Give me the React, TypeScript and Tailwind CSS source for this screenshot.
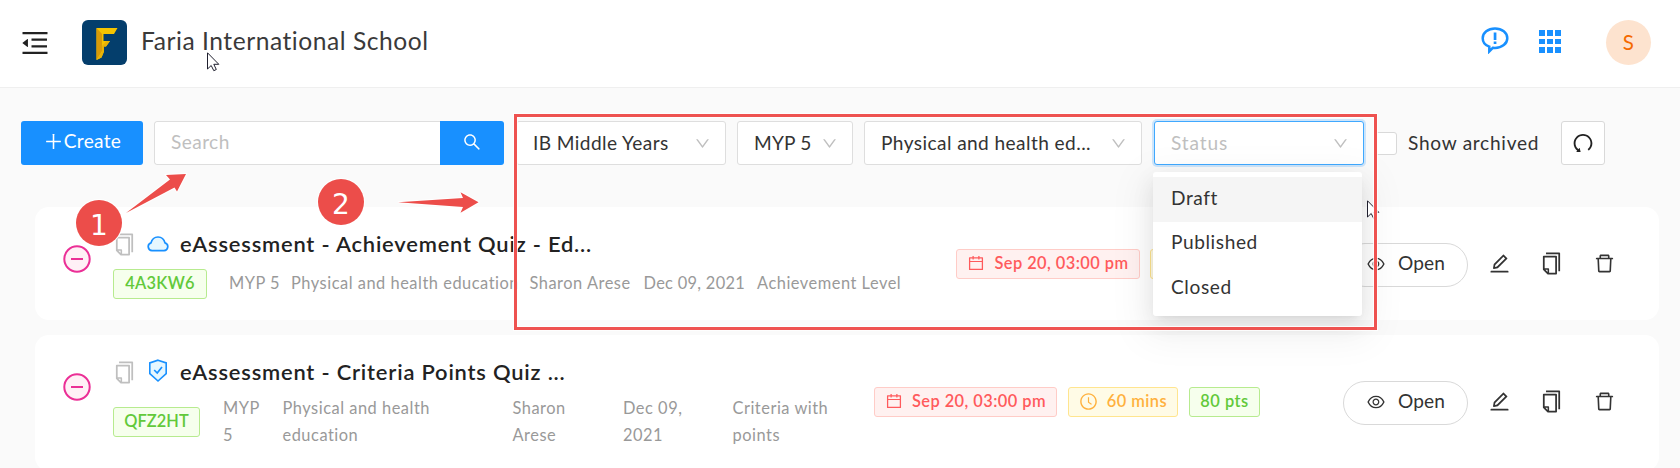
import type { ReactNode } from 'react';
import {
  AiOutlineCalendar,
  AiOutlineClockCircle,
  AiOutlineCopy,
  AiOutlineDelete,
  AiOutlineDown,
  AiOutlineEdit,
  AiOutlineEye,
  AiOutlineMenuFold,
  AiOutlinePlus,
  AiOutlineSearch,
  AiOutlineUndo,
} from 'react-icons/ai';

const statusOptions = ['Draft', 'Published', 'Closed'];

function Logo() {
  return (
    <svg className="ml-[31px] size-[45px]" viewBox="0 0 45 45">
      <rect width="45" height="45" rx="6" fill="#043e6c" />
      <path d="M14.500 8h21l-3.500 6h-10.500v7h6.500l-4 5.500h-2v5l-2.500 6-5 2.500z" fill="#f5c400" />
      <path d="M14.500 8l5.500 6v17l-5.500 9z" fill="#d99a08" />
      <path d="M20 26l4-4.500 4-.5-4 5.500h-2v5l-2.500 6-5 2.500 5.500-8z" fill="#e9b106" />
    </svg>
  );
}

function Cursor({ className }: { className: string }) {
  return (
    <svg className={className} width="13" height="20" viewBox="0 0 13 20">
      <path
        d="M.5 .8v16.200l3.700-3.500 2.600 5.200 2.500-1.200-2.500-5.200h5z"
        fill="#fff"
        stroke="#1f1f2e"
        strokeWidth="1"
      />
    </svg>
  );
}

function CloudIcon() {
  return (
    <svg className="h-[16px] w-[22px]" viewBox="0 0 22 16">
      <path
        d="M5 14.700a4 4 0 0 1-1-7.800c.9-3.500 3.500-5.900 7-5.900s6.100 2.400 7 5.900a4 4 0 0 1-1 7.800z"
        fill="#e6f7ff"
        stroke="#1890ff"
        strokeWidth="1.700"
      />
    </svg>
  );
}

function ShieldIcon() {
  return (
    <svg className="-mt-[2px] h-[24px] w-[22px]" viewBox="0 0 22 24">
      <path
        d="M11 1.200l8.200 2.700v10.800L11 22l-8.200-7.300V3.900z"
        fill="#e6f7ff"
        stroke="#1890ff"
        strokeWidth="1.600"
      />
      <path d="M7.200 11l3 3 4.800-6" fill="none" stroke="#1890ff" strokeWidth="1.700" />
    </svg>
  );
}

function MinusIcon() {
  return (
    <svg className="size-[28px]" viewBox="0 0 28 28">
      <circle cx="14" cy="14" r="12.700" fill="#fff0f6" stroke="#eb2f96" strokeWidth="2" />
      <path d="M8 14h12" stroke="#eb2f96" strokeWidth="2" />
    </svg>
  );
}

function FeedbackIcon() {
  return (
    <svg className="-mt-[4px] h-[27px] w-[28px]" viewBox="0 0 28 27">
      <path
        d="M14 1.500c7 0 12.300 4.300 12.300 9.700S21 20.900 14 20.900c-.8 0-1.500 0-2.200-.1L8.300 24.400v-4.700C4.300 18.200 1.700 15 1.700 11.200 1.700 5.800 7 1.500 14 1.500z"
        fill="none"
        stroke="#1890ff"
        strokeWidth="2.500"
      />
      <path d="M12.700 5.500h2.700v7.500h-2.700zM12.700 14.500h2.700v2.500h-2.700z" fill="#1890ff" />
    </svg>
  );
}

function Header() {
  return (
    <header className="flex h-[88px] items-center border-b border-[#efefef] bg-white pb-[2px] pl-[19px] pr-[29px]">
      <AiOutlineMenuFold className="size-[32px] text-[#222]" />
      <Logo />
      <h1 className="ml-[14px] -mt-[2px] text-[24.600px] tracking-[0.540px] text-[#3a3a3a]">Faria International School</h1>
      <div className="ml-auto flex items-center">
        <FeedbackIcon />
        <div className="-mt-[2px] ml-[30px] grid grid-cols-3 gap-[2.500px]">
          {Array.from({ length: 9 }).map((_, i) => (
            <span key={i} className="size-[5.700px] bg-[#1890ff]" />
          ))}
        </div>
        <div className="ml-[45px] flex size-[45px] items-center justify-center rounded-full bg-[#fde3cf] pb-px text-[20.500px] text-[#f56a00]">
          S
        </div>
      </div>
    </header>
  );
}

function Select({ className, children }: { className: string; children: ReactNode }) {
  return (
    <div className={`flex h-[44px] items-center justify-between rounded-[3px] border bg-white pl-4 pr-[14px] ${className}`}>
      <span className="whitespace-nowrap">{children}</span>
      <AiOutlineDown className="size-[17px] shrink-0 text-[#bfbfbf]" />
    </div>
  );
}

function Toolbar() {
  return (
    <div className="flex h-[44px] items-center pl-[21px]">
      <button className="flex h-[44px] w-[122px] items-center justify-center rounded-[3px] bg-[#1890ff] pb-[3px] tracking-[0.300px] text-white">
        <AiOutlinePlus className="size-[21px]" />
        Create
      </button>
      <div className="ml-[11px] flex h-[44px] w-[350px] overflow-hidden rounded-[3px]">
        <div className="flex-1 rounded-l-[3px] border border-r-0 border-[#dedede] bg-white pl-4 pt-[6px] text-[#bfbfbf]">Search</div>
        <button className="flex w-[64px] items-center justify-center bg-[#1890ff] pb-[3px] text-white">
          <AiOutlineSearch className="size-[20px]" />
        </button>
      </div>
      <Select className="ml-[12px] w-[210px] border-[#dedede]">IB Middle Years</Select>
      <Select className="ml-[11px] w-[116px] border-[#dedede] tracking-[0.200px]">MYP 5</Select>
      <Select className="ml-[11px] w-[278px] border-[#dedede]">Physical and health ed...</Select>
      <div className="relative ml-[12px]">
        <Select className="w-[210px] border-[#40a9ff] tracking-[0.850px] text-[#bfbfbf] shadow-[0_0_0_2px_rgba(24,144,255,0.2)]">Status</Select>
        <ul className="absolute -left-px top-[51px] z-10 w-[209px] rounded-[3px] bg-white py-[5px] shadow-[0_4px_8px_-5px_rgba(0,0,0,0.12),0_8px_22px_rgba(0,0,0,0.08),0_12px_38px_11px_rgba(0,0,0,0.05)]">
          {statusOptions.map((option) => (
            <li key={option} className="flex h-[44.700px] items-center pb-[3px] pl-[18px] tracking-[0.600px] first:bg-[#f5f5f5]">
              {option}
            </li>
          ))}
        </ul>
      </div>
      <span className="ml-[10px] size-[23px] rounded-[3px] border border-[#d9d9d9] bg-white" />
      <span className="ml-[11px] w-[153px] whitespace-nowrap tracking-[0.720px]">Show archived</span>
      <button className="flex size-[44px] items-center justify-center rounded-[3px] border border-[#d9d9d9] bg-white">
        <AiOutlineUndo className="size-[24px] text-[#222]" />
      </button>
    </div>
  );
}

function Tag({ className, children }: { className: string; children: ReactNode }) {
  return (
    <span className={`flex h-[30px] shrink-0 items-center justify-center gap-[9px] whitespace-nowrap rounded-[3px] border pb-[2px] text-[16.400px] font-semibold ${className}`}>
      {children}
    </span>
  );
}

function RowActions() {
  return (
    <div className="flex shrink-0 items-center text-[#333]">
      <button className="flex h-[44px] w-[125px] items-center justify-center gap-3 rounded-full border border-[#d9d9d9] pb-[3px] tracking-[0.100px]">
        <AiOutlineEye className="size-[20px]" />
        Open
      </button>
      <AiOutlineEdit className="-mt-[3px] ml-[20px] size-[23px]" />
      <AiOutlineCopy className="-mt-[3px] ml-[28px] size-[25px]" />
      <AiOutlineDelete className="-mt-[3px] ml-[29px] size-[23px]" />
    </div>
  );
}

function CardTitle({ icon, children }: { icon: ReactNode; children: ReactNode }) {
  return (
    <div className="flex h-[32px] items-center">
      <AiOutlineCopy className="-ml-px size-[25px] text-[#bfbfbf]" />
      <span className="ml-[10px] w-[33px]">{icon}</span>
      <h2 className="whitespace-nowrap text-[21.900px] font-semibold tracking-[0.810px] text-[#222]">{children}</h2>
    </div>
  );
}

function AchievementCard() {
  return (
    <article className="flex h-[113px] rounded-[14px] bg-white pl-[28px] pr-[43px]">
      <div className="w-[50px] pt-[38px]">
        <MinusIcon />
      </div>
      <div className="w-[842px] pt-[21px]">
        <CardTitle icon={<CloudIcon />}>eAssessment - Achievement Quiz - Ed...</CardTitle>
        <div className="mt-[9px] flex items-center text-[16.400px] tracking-[0.520px] text-[#999]">
          <Tag className="mr-[22px] w-[94px] border-[#b7eb8f] bg-[#f6ffed] tracking-[0.300px] text-[#62c93a]">4A3KW6</Tag>
          <span className="w-[62px] whitespace-nowrap pb-px">MYP 5</span>
          <span className="w-[238.500px] whitespace-nowrap pb-px">Physical and health education</span>
          <span className="w-[114px] whitespace-nowrap pb-px">Sharon Arese</span>
          <span className="w-[113.500px] whitespace-nowrap pb-px tracking-[0.300px]">Dec 09, 2021</span>
          <span className="whitespace-nowrap pb-px">Achievement Level</span>
        </div>
      </div>
      <div className="flex flex-1 items-start pt-[42px]">
        <Tag className="ml-px w-[184px] border-[#ffccc7] bg-[#fff1f0] tracking-[0.450px] text-[#ff5a5c]">
          <AiOutlineCalendar className="size-[18px]" />
          Sep 20, 03:00 pm
        </Tag>
        <Tag className="ml-[10px] w-[110px] border-[#ffe58f] bg-[#fffbe6] tracking-[0.450px] text-[#ffb13d]">
          <AiOutlineClockCircle className="size-[19px]" />
          60 mins
        </Tag>
      </div>
      <div className="pt-[36px]">
        <RowActions />
      </div>
    </article>
  );
}

function CriteriaCard() {
  return (
    <article className="flex h-[136px] rounded-[14px] bg-white pl-[28px] pr-[43px]">
      <div className="w-[50px] pt-[38px]">
        <MinusIcon />
      </div>
      <div className="w-[760px] pt-[21px]">
        <CardTitle icon={<ShieldIcon />}>eAssessment - Criteria Points Quiz ...</CardTitle>
        <div className="mt-[7px] flex items-center text-[16.400px] leading-[26.500px] tracking-[0.520px] text-[#999]">
          <Tag className="mr-[23px] mt-px w-[87px] border-[#b7eb8f] bg-[#f6ffed] tracking-[0.050px] text-[#62c93a]">QFZ2HT</Tag>
          <span className="w-[59.500px]">MYP<br />5</span>
          <span className="w-[230px]">Physical and health<br />education</span>
          <span className="w-[110.500px]">Sharon<br />Arese</span>
          <span className="w-[109.500px]">Dec 09,<br />2021</span>
          <span className="whitespace-nowrap">Criteria with<br />points</span>
        </div>
      </div>
      <div className="flex flex-1 items-start pt-[52px]">
        <Tag className="ml-px w-[183px] border-[#ffccc7] bg-[#fff1f0] tracking-[0.450px] text-[#ff5a5c]">
          <AiOutlineCalendar className="size-[18px]" />
          Sep 20, 03:00 pm
        </Tag>
        <Tag className="ml-[11px] w-[110px] border-[#ffe58f] bg-[#fffbe6] tracking-[0.450px] text-[#ffb13d]">
          <AiOutlineClockCircle className="size-[19px]" />
          60 mins
        </Tag>
        <Tag className="ml-[11px] w-[71px] border-[#b7eb8f] bg-[#f6ffed] tracking-[0.500px] text-[#62c93a]">80 pts</Tag>
      </div>
      <div className="pt-[46px]">
        <RowActions />
      </div>
    </article>
  );
}

// Callouts drawn over the page: numbered badges, arrows and the filter frame
function Annotations() {
  return (
    <div className="pointer-events-none absolute inset-0 z-20">
      <Cursor className="absolute left-[207px] top-[52px]" />
      <Cursor className="absolute left-[1367px] top-[200px]" />
      <div className="absolute left-[514px] top-[114px] h-[216px] w-[863px] border-3 border-[#ee5250] shadow-[0_0_0_1px_rgba(255,255,255,0.8),inset_0_0_0_1px_rgba(255,255,255,0.8)]" />
      <svg className="absolute inset-0" width="520" height="240" viewBox="0 0 520 240">
        <g fill="#ec4d4a" stroke="#fff" strokeWidth="2" paintOrder="stroke">
          <path d="M126 213l44-33.500-4-4.500 20-1-9 17.500-2.500-4z" />
          <path d="M398 202.300l65-4.300-2.500-5.700 18 10-18 10.400 2.500-5.700z" />
        </g>
      </svg>
      <span className="absolute left-[76px] top-[200px] flex size-[46px] items-center justify-center rounded-full bg-[#ec4d4a] pt-[5px] font-['DejaVu_Sans',sans-serif] text-[28px] text-white shadow-[0_0_0_1px_white]">1</span>
      <span className="absolute left-[318px] top-[179px] flex size-[46px] items-center justify-center rounded-full bg-[#ec4d4a] pt-[5px] font-['DejaVu_Sans',sans-serif] text-[28px] text-white shadow-[0_0_0_1px_white]">2</span>
    </div>
  );
}

export default function App() {
  return (
    <div className="relative h-[468px] w-[1680px] overflow-hidden bg-[#fafafa] font-[Lato,sans-serif] text-[19.100px] leading-normal tracking-[0.420px] text-[#333]">
      <Header />
      <main className="pt-[33px]">
        <Toolbar />
        <section className="ml-[35px] mt-[42px] flex w-[1624px] flex-col gap-[15px]">
          <AchievementCard />
          <CriteriaCard />
        </section>
      </main>
      <Annotations />
    </div>
  );
}
